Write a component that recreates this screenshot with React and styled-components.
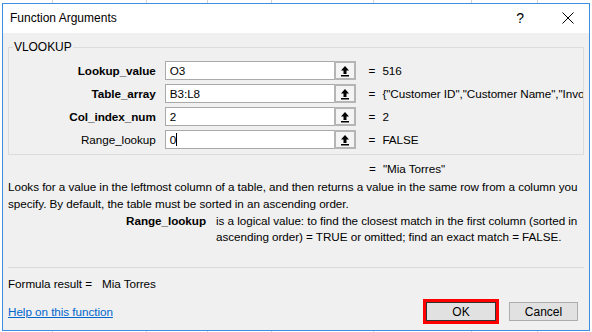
import React from "react";
import styled, { createGlobalStyle } from "styled-components";

const GlobalStyle = createGlobalStyle`
  html, body {
    margin: 0;
    padding: 0;
  }
  body {
    width: 592px;
    height: 332px;
    overflow: hidden;
    background-color: #fff;
    background-image:
      linear-gradient(#d4d4d4, #d4d4d4),
      linear-gradient(#d4d4d4, #d4d4d4),
      linear-gradient(#d4d4d4, #d4d4d4),
      linear-gradient(#d4d4d4, #d4d4d4),
      linear-gradient(#d4d4d4, #d4d4d4),
      linear-gradient(#d4d4d4, #d4d4d4),
      linear-gradient(#d4d4d4, #d4d4d4);
    background-size: 1px 100%;
    background-repeat: no-repeat;
    background-position: 52px 0, 146px 0, 207px 0, 271px 0, 373px 0, 471px 0, 537px 0;
    font-family: "Liberation Sans", Arial, sans-serif;
    font-size: 11.7px;
    letter-spacing: -0.05px;
    color: #000;
  }
`;

const Window = styled.div`
  box-sizing: border-box;
  margin: 3px 0 0 2px;
  width: 588px;
  height: 328px;
  border: 1px solid #3d8ee0;
  background: #f0f0f0;
  display: flex;
  flex-direction: column;
`;

const TitleBar = styled.div`
  height: 29px;
  background: #fff;
  display: flex;
  align-items: center;
  padding-left: 7px;
`;

const Title = styled.div`
  flex: 1;
  font-size: 12px;
  letter-spacing: 0;
  padding-bottom: 1px;
`;

const HelpMark = styled.div`
  width: 20px;
  font-size: 14px;
  text-align: center;
  margin-right: 32px;
  padding-bottom: 2px;
`;

const CloseBtn = styled.div`
  width: 12px;
  height: 12px;
  margin-right: 15px;
  display: flex;
  margin-bottom: 1px;
`;

const Content = styled.div`
  flex: 1;
  padding: 6px 5px 0 5px;
  display: flex;
  flex-direction: column;
`;

const Group = styled.fieldset`
  margin: 0;
  padding: 6px 0 5px 0;
  border: 1px solid #dcdcdc;
  display: flex;
  flex-direction: column;
  gap: 4px;
  min-width: 0;
`;

const Legend = styled.legend`
  padding: 0 1px;
  margin-left: 4px;
  font-size: 12px;
  line-height: 16px;
`;

const ArgRow = styled.div`
  display: flex;
  align-items: center;
  height: 19px;
`;

const ArgLabel = styled.div`
  width: 147px;
  margin-right: 9px;
  text-align: right;
  font-weight: ${p => (p.$required ? 700 : 400)};
  white-space: nowrap;
`;

const ArgInput = styled.div`
  box-sizing: border-box;
  width: 170px;
  height: 19px;
  border: 1px solid #a9a9a9;
  border-right: none;
  background: #fff;
  padding-left: 4px;
  display: flex;
  align-items: center;
`;

const Caret = styled.span`
  display: inline-block;
  width: 1px;
  height: 13px;
  background: #000;
`;

const RefButton = styled.div`
  box-sizing: border-box;
  width: 22px;
  height: 19px;
  border: 2px solid #b5b5b5;
  background: #f4f4f4;
  display: flex;
  align-items: center;
  justify-content: center;
`;

const Eq = styled.span`
  width: 14px;
  flex: none;
`;

const ArgValue = styled.div`
  display: flex;
  margin-left: 12px;
  width: 215px;
  overflow: hidden;
  white-space: nowrap;
`;

const ResultLine = styled.div`
  display: flex;
  margin-top: 6px;
  padding-left: 361px;
  line-height: 16px;
`;

const Description = styled.div`
  line-height: 17px;
  white-space: nowrap;
  margin-top: 1px;
`;

const ArgHelp = styled.div`
  display: flex;
  line-height: 16px;
  margin-top: 1px;
`;

const ArgHelpLabel = styled.div`
  width: 198px;
  text-align: right;
  font-weight: 700;
  margin-right: 10px;
  white-space: nowrap;
`;

const ArgHelpText = styled.div`
  white-space: nowrap;
`;

const Separator = styled.div`
  height: 1px;
  background: #dadada;
  margin-top: 22px;
`;

const FormulaResult = styled.div`
  display: flex;
  margin-top: 8px;
  line-height: 16px;
`;

const FormulaLabel = styled.span`
  width: 94px;
`;

const Footer = styled.div`
  display: flex;
  align-items: center;
  height: 25px;
  margin-top: 7px;
  padding-right: 6px;
`;

const HelpLink = styled.a`
  flex: 1;
  color: #0066cc;
  text-decoration: underline;
  cursor: pointer;
`;

const Highlight = styled.div`
  border: 3px solid #ff0000;
  display: flex;
  margin-right: 10px;
`;

const DialogButton = styled.button`
  box-sizing: border-box;
  width: ${p => p.$width}px;
  height: 19px;
  border: 1px solid ${p => (p.$focused ? "#333" : "#adadad")};
  background: #e1e1e1;
  font-family: inherit;
  font-size: 12px;
  color: #000;
  padding: 0;
`;

function UpArrowIcon() {
  return (
    <svg width="10" height="12" viewBox="0 0 10 12">
      <path d="M5 1 L9 5.5 H6.5 V9 H3.5 V5.5 H1 Z" fill="#000" />
      <rect x="1" y="10" width="8" height="1.5" fill="#000" />
    </svg>
  );
}

function CloseIcon() {
  return (
    <svg width="12" height="12" viewBox="0 0 12 12">
      <path d="M0.5 0.5 L11.5 11.5 M11.5 0.5 L0.5 11.5" stroke="#000" strokeWidth="1" />
    </svg>
  );
}

const args = [
  { name: "Lookup_value", input: "O3", value: "516", required: true },
  { name: "Table_array", input: "B3:L8", value: '{"Customer ID","Customer Name","Invoice Number"', required: true },
  { name: "Col_index_num", input: "2", value: "2", required: true },
  { name: "Range_lookup", input: "0", value: "FALSE", required: false, caret: true },
];

export default function App() {
  return (
    <>
      <GlobalStyle />
      <Window>
        <TitleBar>
          <Title>Function Arguments</Title>
          <HelpMark>?</HelpMark>
          <CloseBtn>
            <CloseIcon />
          </CloseBtn>
        </TitleBar>
        <Content>
          <Group>
            <Legend>VLOOKUP</Legend>
            {args.map(a => (
              <ArgRow key={a.name}>
                <ArgLabel $required={a.required}>{a.name}</ArgLabel>
                <ArgInput>
                  {a.input}
                  {a.caret && <Caret />}
                </ArgInput>
                <RefButton>
                  <UpArrowIcon />
                </RefButton>
                <ArgValue>
                  <Eq>=</Eq>
                  <span>{a.value}</span>
                </ArgValue>
              </ArgRow>
            ))}
          </Group>
          <ResultLine>
            <Eq>=</Eq>
            <span>"Mia Torres"</span>
          </ResultLine>
          <Description>
            Looks for a value in the leftmost column of a table, and then returns a value in the same row from a column you
            <br />
            specify. By default, the table must be sorted in an ascending order.
          </Description>
          <ArgHelp>
            <ArgHelpLabel>Range_lookup</ArgHelpLabel>
            <ArgHelpText>
              is a logical value: to find the closest match in the first column (sorted in
              <br />
              ascending order) = TRUE or omitted; find an exact match = FALSE.
            </ArgHelpText>
          </ArgHelp>
          <Separator />
          <FormulaResult>
            <FormulaLabel>Formula result =</FormulaLabel>
            <span>Mia Torres</span>
          </FormulaResult>
          <Footer>
            <HelpLink>Help on this function</HelpLink>
            <Highlight>
              <DialogButton $width={70} $focused>OK</DialogButton>
            </Highlight>
            <DialogButton $width={69}>Cancel</DialogButton>
          </Footer>
        </Content>
      </Window>
    </>
  );
}
